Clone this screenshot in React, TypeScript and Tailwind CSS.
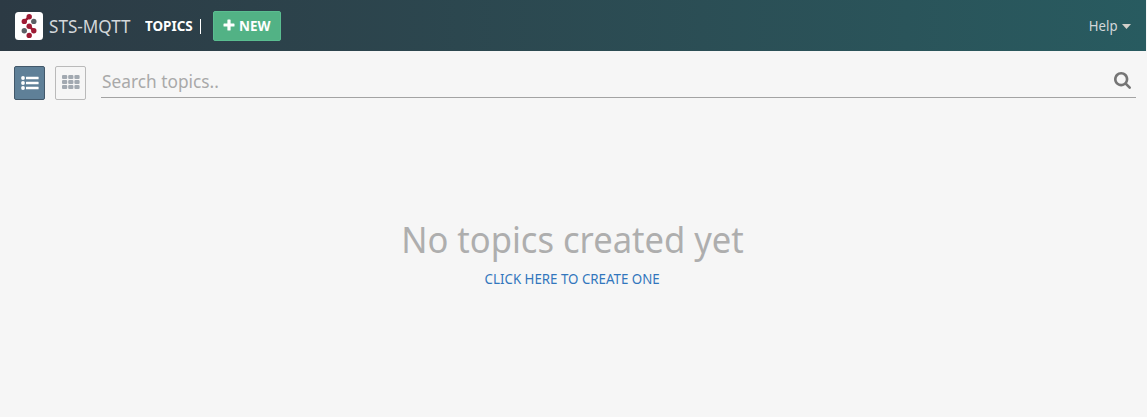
import React from "react";

function Logo() {
  return (
    <svg viewBox="0 0 28 28" className="mt-px block h-7 w-7 shrink-0">
      <rect width="28" height="28" rx="3.5" fill="#fff" />
      <g fill="#9e1b34" stroke="#9e1b34">
        <path d="M14.200 4.800 9.300 9.400M14.200 14.200l4.600 4.600" strokeWidth="2.4" />
        <g stroke="none">
          <circle cx="14.2" cy="4.8" r="2.7" />
          <circle cx="9.3" cy="9.4" r="2.7" />
          <circle cx="14.2" cy="14.2" r="2.7" />
          <circle cx="18.8" cy="18.8" r="2.7" />
          <circle cx="14.2" cy="23.4" r="2.7" />
        </g>
      </g>
      <circle cx="18.8" cy="9.4" r="2.7" fill="#5b6065" />
      <circle cx="9.3" cy="18.8" r="2.7" fill="#5b6065" />
    </svg>
  );
}

function PlusIcon() {
  return (
    <svg viewBox="0 0 12 12" className="-mt-px block h-3 w-3 shrink-0" fill="#fff">
      <path d="M5 .5h2a.6.6 0 0 1 .6.6v3.3h3.3a.6.6 0 0 1 .6.6v2a.6.6 0 0 1-.6.6H7.600v3.300a.6.6 0 0 1-.6.6H5a.6.6 0 0 1-.6-.6V7.600H1.100a.6.6 0 0 1-.6-.6V5a.6.6 0 0 1 .6-.6h3.300V1.100A.6.6 0 0 1 5 .5z" />
    </svg>
  );
}

function ListIcon() {
  return (
    <svg viewBox="0 0 18 14" className="block h-3.5 w-[18px]" fill="#fff">
      {[2, 7, 12].map((y) => (
        <g key={y}>
          <circle cx="2" cy={y} r="1.9" />
          <rect x="5" y={y - 1.3} width="12.6" height="2.6" rx="0.4" />
        </g>
      ))}
    </svg>
  );
}

function GridIcon() {
  return (
    <svg viewBox="0 0 18 14" className="-mt-0.5 block h-3.5 w-[18px]" fill="#a2a9b1">
      {[0, 5, 10].map((y) =>
        [0, 6.2, 12.4].map((x) => (
          <rect key={`${x}-${y}`} x={x} y={y} width="5.2" height="4" rx="1.1" />
        )),
      )}
    </svg>
  );
}

function SearchIcon() {
  return (
    <svg viewBox="0 0 1664 1664" className="-mt-[3px] block h-[17px] w-[17px]" fill="#757575">
      <path d="M1152 704q0-185-131.500-316.500T704 256 387.500 387.500 256 704t131.500 316.500T704 1152t316.500-131.500T1152 704zm512 832q0 52-38 90t-90 38q-54 0-90-38l-343-342q-179 124-399 124-143 0-273.500-55.500t-225-150-150-225T0 704t55.500-273.500 150-225 225-150T704 0t273.500 55.500 225 150 150 225T1408 704q0 220-124 399l343 343q37 37 37 90z" />
    </svg>
  );
}

export default function App() {
  return (
    <div className="h-[417px] overflow-hidden bg-[#f6f6f6] font-['Noto_Sans',sans-serif]">
      <header className="mr-px flex h-[51px] items-center bg-linear-to-r from-[#2c3a44] to-[#285b60] pr-[15px] pl-[15px]">
        <Logo />
        <span className="ml-1.5 w-24 shrink-0 text-lg leading-6 whitespace-nowrap text-[#d3d7da]">
          <span className="inline-block origin-left scale-x-95">STS-MQTT</span>
        </span>
        <span className="w-[55px] shrink-0 text-sm font-bold whitespace-nowrap text-white">
          <span className="inline-block origin-left scale-x-96">TOPICS</span>
        </span>
        <span className="mt-px h-[15px] w-px bg-white" />
        <button className="ml-3 flex h-[30px] w-[68px] items-center rounded-[2px] border border-[#5abd90] bg-[#52b285] pl-[9px] text-sm font-bold text-white">
          <PlusIcon />
          <span className="ml-1 inline-block origin-left scale-x-96">NEW</span>
        </button>
        <button className="ml-auto flex items-center text-sm text-[#d3d7da]">
          <span className="inline-block origin-right scale-x-94">Help</span>
          <svg viewBox="0 0 9 5" className="mt-0.5 ml-[5px] h-[5px] w-[9px]" fill="#d3d0ca">
            <path d="M0 0h9L4.500 5z" />
          </svg>
        </button>
      </header>

      <div className="flex pt-[15px] pr-[11px] pl-3.5">
        <button className="flex h-[34px] w-[31px] items-center justify-center rounded-[2px] border border-[#42586a] bg-[#5f8098]">
          <ListIcon />
        </button>
        <button className="ml-2.5 flex h-[34px] w-[31px] items-center justify-center rounded-[2px] border border-[#bababa]">
          <GridIcon />
        </button>
        <div className="ml-[15px] flex h-8 flex-1 items-center border-b border-[#a3a3a3] pr-[5px] pl-px">
          <input
            placeholder="Search topics.."
            className="mb-0.5 flex-1 origin-left scale-x-96 bg-transparent text-lg leading-6 text-[#757575] outline-none placeholder:text-[#a9a9a9]"
          />
          <SearchIcon />
        </div>
      </div>

      <main className="flex flex-col items-center pt-[114px] pr-0.5">
        <h1 className="scale-x-96 text-4xl leading-[52px] whitespace-nowrap text-[#aeaeae]">
          No topics created yet
        </h1>
        <a
          href="#"
          className="mt-[3px] scale-x-95 text-sm leading-5 whitespace-nowrap text-[#3276bd]"
        >
          CLICK HERE TO CREATE ONE
        </a>
      </main>
    </div>
  );
}
